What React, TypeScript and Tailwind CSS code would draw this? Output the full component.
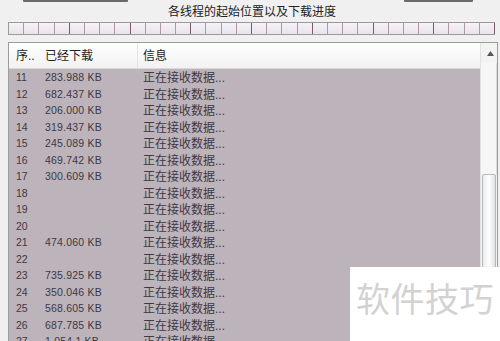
import React from "react";

const rows: [string, string][] = [
  ["11", "283.988 KB"],
  ["12", "682.437 KB"],
  ["13", "206.000 KB"],
  ["14", "319.437 KB"],
  ["15", "245.089 KB"],
  ["16", "469.742 KB"],
  ["17", "300.609 KB"],
  ["18", ""],
  ["19", ""],
  ["20", ""],
  ["21", "474.060 KB"],
  ["22", ""],
  ["23", "735.925 KB"],
  ["24", "350.046 KB"],
  ["25", "568.605 KB"],
  ["26", "687.785 KB"],
  ["27", "1.054.1 KB"],
];

const cells = Array.from({ length: 32 }, (_, i) => i);

export default function App() {
  return (
    <div
      className="relative w-[500px] h-[341px] overflow-hidden bg-[#f0f0f0] text-[#333]"
      style={{ fontFamily: '"Liberation Sans", "Noto Sans CJK SC", sans-serif' }}
    >
      {/* top button edges */}
      <div className="flex h-[2px]">
        <div className="ml-[23px] w-[105px] h-[2px] bg-[#6a6a6a] rounded-b-[1px]" />
        <div className="ml-[276px] w-[69px] h-[2px] bg-[#6a6a6a] rounded-b-[1px]" />
      </div>
      {/* title */}
      <div className="h-[20px] leading-[20px] text-center text-[12px] text-[#222] pl-[4px]">
        各线程的起始位置以及下载进度
      </div>
      {/* progress cells */}
      <div className="ml-[8px] w-[487px] h-[13px] flex border-t border-b border-l border-[#9a9a9a] bg-[#f1ecf3]">
        {cells.map((i) => (
          <div
            key={i}
            className={`flex-1 h-full border-r ${
              i % 4 === 3 ? "border-[#7a5a6e]" : "border-[#b094a8]"
            } bg-gradient-to-b from-[#f6f2f7] to-[#e9e2ec]`}
          />
        ))}
      </div>
      {/* list box */}
      <div className="mt-[7px] ml-[8px] w-[490px] h-[320px] border border-[#9c9c9c] flex">
        <div className="flex-1 flex flex-col">
          {/* header */}
          <div className="h-[26px] flex items-center text-[12px] text-[#222] bg-gradient-to-b from-white to-[#f2f2f2] border-b border-[#d8d8d8] shrink-0">
            <div className="w-[36px] pl-[7px]">序..</div>
            <div className="w-[92px]">已经下载</div>
            <div className="w-[1px] self-stretch bg-[#e4e4e4]" />
            <div className="pl-[5px]">信息</div>
          </div>
          {/* rows */}
          <div className="flex-1 bg-[#bdb3bb] pt-[1px]">
            {rows.map(([n, s]) => (
              <div key={n} className="h-[16.5px] flex items-center text-[#3e3844]">
                <div className="w-[36px] pl-[7px] text-[10.5px]">{n}</div>
                <div className="w-[98px] text-[10.5px] tracking-[0.2px]">{s}</div>
                <div className="text-[12px]">正在接收数据...</div>
              </div>
            ))}
          </div>
        </div>
        {/* scrollbar */}
        <div className="w-[17px] flex flex-col bg-[#f3f3f3] border-l border-[#e2e2e2]">
          <div className="h-[20px] flex items-center justify-center pl-[2px]">
            <svg width="7" height="5" viewBox="0 0 7 5">
              <path d="M3.5 0 L7 5 L0 5 Z" fill="#555" />
            </svg>
          </div>
          <div className="h-[111px] border-r border-[#dcdcdc] bg-[#f6f6f6]" />
          <div className="h-[140px] mx-[1px] rounded-[2px] border border-[#b8b8b8] bg-gradient-to-r from-[#e8eaec] via-white to-[#dfe2e4]" />
        </div>
      </div>
      {/* watermark overlay */}
      <div className="absolute left-[350px] top-[267px] w-[150px] h-[74px] bg-white">
        <div className="pl-[6px] pt-[13px] text-[34px] leading-[40px] text-[#d2d2d2] tracking-[0.5px]">
          软件技巧
        </div>
      </div>
    </div>
  );
}
